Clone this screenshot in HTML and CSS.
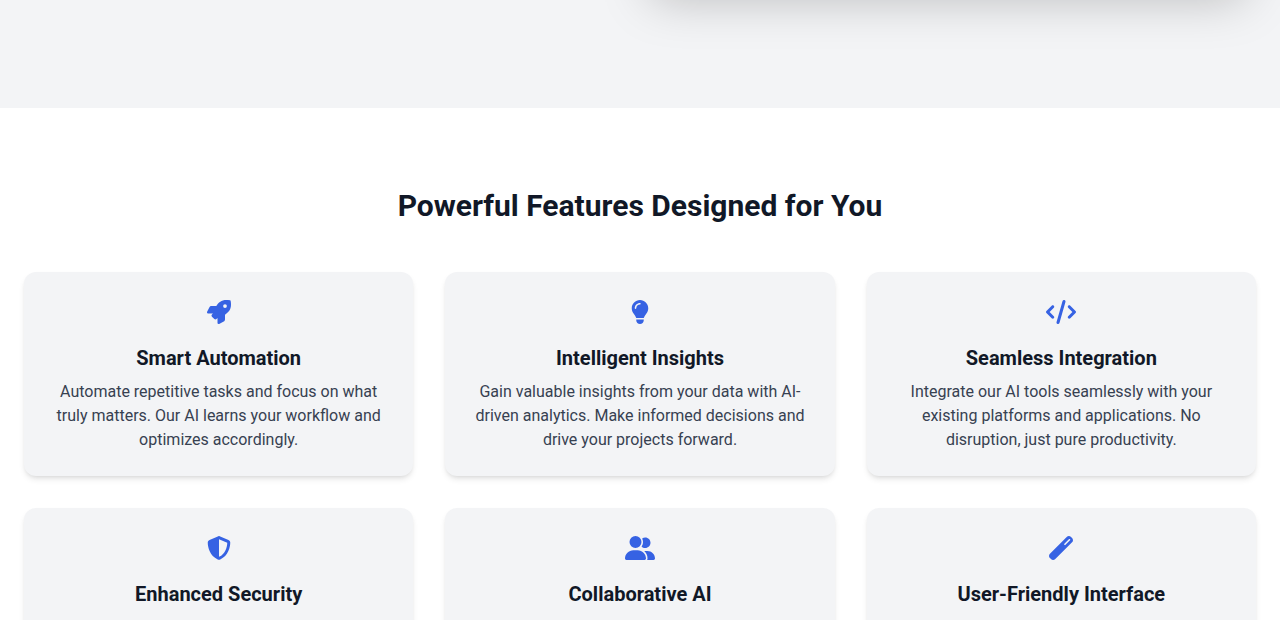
FILE: index.html
```html
<!DOCTYPE html>
<html lang="en">
<head>
<meta charset="utf-8">
<meta name="viewport" content="width=device-width, initial-scale=1">
<title>Powerful Features Designed for You</title>
<link rel="stylesheet" href="styles.css">
</head>
<body>
<div class="hero"><div class="hero-media"></div></div>
<section class="features">
  <h2 class="features-title">Powerful Features Designed for You</h2>
  <div class="feature-grid">
    <article class="card">
      <div class="card-icon"><svg viewBox="0 0 512 512" aria-hidden="true"><path d="M505.12 19.09c-1.19-5.53-6.66-11-12.21-12.19C460.72 0 435.51 0 410.41 0 307.18 0 245.27 55.2 199.05 128H94.84c-16.35 0-35.56 11.88-42.89 26.48L2.52 253.3A28.4 28.4 0 0 0 0 264a24 24 0 0 0 24 24h103.8l-22.46 22.47c-11.37 11.36-13 32.26 0 45.25l50.9 50.9c11.16 11.2 32.16 13.16 45.28 0L224 384.16V488a24 24 0 0 0 24 24 28.56 28.56 0 0 0 10.7-2.52l98.74-49.39c14.63-7.3 26.5-26.5 26.5-42.86V312.8c72.6-46.31 128.04-108.4 128.04-211.1 0-25.2 0-50.4-6.86-82.61zM384 168a40 40 0 1 1 40-40 40 40 0 0 1-40 40z"/></svg></div>
      <h3 class="card-title">Smart Automation</h3>
      <p class="card-text">Automate repetitive tasks and focus on what truly matters. Our AI learns your workflow and optimizes accordingly.</p>
    </article>
    <article class="card">
      <div class="card-icon"><svg viewBox="0 0 384 512" aria-hidden="true"><path d="M272 384c9.6-31.9 29.5-59.1 49.2-86.2c5.2-7.1 10.4-14.2 15.4-21.4c19.8-28.5 31.4-63 31.4-100.3C368 78.8 289.2 0 192 0S16 78.8 16 176c0 37.3 11.6 71.9 31.4 100.3c5 7.2 10.2 14.3 15.4 21.4c19.8 27.1 39.7 54.4 49.2 86.2H272zM192 512c44.2 0 80-35.8 80-80V416H112v16c0 44.2 35.8 80 80 80zM112 176c0 8.8-7.2 16-16 16s-16-7.2-16-16c0-61.9 50.1-112 112-112c8.8 0 16 7.2 16 16s-7.2 16-16 16c-44.2 0-80 35.8-80 80z"/></svg></div>
      <h3 class="card-title">Intelligent Insights</h3>
      <p class="card-text">Gain valuable insights from your data with AI-driven analytics. Make informed decisions and drive your projects forward.</p>
    </article>
    <article class="card">
      <div class="card-icon"><svg viewBox="0 0 640 512" aria-hidden="true"><path d="M392.8 1.2c-17-4.9-34.7 5-39.6 22l-128 448c-4.9 17 5 34.7 22 39.6s34.7-5 39.6-22l128-448c4.9-17-5-34.7-22-39.6zm80.6 120.1c-12.5 12.5-12.5 32.8 0 45.3L562.7 256l-89.4 89.4c-12.5 12.5-12.5 32.8 0 45.3s32.8 12.5 45.3 0l112-112c12.5-12.5 12.5-32.8 0-45.3l-112-112c-12.5-12.5-32.8-12.5-45.3 0zm-306.7 0c-12.5-12.5-32.8-12.5-45.3 0l-112 112c-12.5 12.5-12.5 32.8 0 45.3l112 112c12.5 12.5 32.8 12.5 45.3 0s12.5-32.8 0-45.3L77.3 256l89.4-89.4c12.5-12.5 12.5-32.8 0-45.3z"/></svg></div>
      <h3 class="card-title">Seamless Integration</h3>
      <p class="card-text">Integrate our AI tools seamlessly with your existing platforms and applications. No disruption, just pure productivity.</p>
    </article>
    <article class="card">
      <div class="card-icon"><svg viewBox="0 0 512 512" aria-hidden="true"><path d="M256 0c4.6 0 9.2 1 13.4 2.9L457.7 82.8c22 9.3 38.4 31 38.3 57.2c-.5 99.2-41.3 280.7-213.6 363.2c-16.7 8-36.1 8-52.8 0C57.3 420.7 16.5 239.2 16 140c-.1-26.2 16.3-47.9 38.3-57.2L242.7 2.9C246.8 1 251.4 0 256 0zm0 66.8V444.8C394 378 431.1 230.1 432 141.4L256 66.8z"/></svg></div>
      <h3 class="card-title">Enhanced Security</h3>
    </article>
    <article class="card">
      <div class="card-icon"><svg viewBox="0 0 640 512" aria-hidden="true"><path d="M96 128a128 128 0 1 1 256 0A128 128 0 1 1 96 128zM0 482.3C0 383.8 79.8 304 178.3 304h91.4C368.2 304 448 383.8 448 482.3c0 16.4-13.3 29.7-29.7 29.7H29.7C13.3 512 0 498.7 0 482.3zM609.3 512H471.4c5.4-9.4 8.6-20.3 8.6-32v-8c0-60.7-27.1-115.2-69.8-151.8c2.4-.1 4.7-.2 7.1-.2h61.4C567.8 320 640 392.2 640 481.3c0 17-13.8 30.7-30.7 30.7zM432 256c-31 0-59-12.6-79.3-32.9C372.4 196.5 384 163.6 384 128c0-26.8-6.6-52.1-18.3-74.3C384.3 40.1 407.2 32 432 32c61.9 0 112 50.1 112 112s-50.1 112-112 112z"/></svg></div>
      <h3 class="card-title">Collaborative AI</h3>
    </article>
    <article class="card">
      <div class="card-icon"><svg viewBox="0 0 512 512" aria-hidden="true"><path fill-rule="evenodd" d="M20 378L378 20c26-26 66-26 92 0l22 22c26 26 26 66 0 92L134 492c-26 26-66 26-92 0L20 470c-26-26-26-66 0-92zM342 198l106-106c8-8 8-16 0-24s-16-8-24 0L318 174z"/></svg></div>
      <h3 class="card-title">User-Friendly Interface</h3>
    </article>
  </div>
</section>
</body>
</html>
```
FILE: styles.css
```css
*, *::before, *::after { box-sizing: border-box; }

body {
  margin: 0;
  height: 100vh;
  overflow: hidden;
  background: #fff;
  color: #111827;
  font-family: Roboto, "Liberation Sans", sans-serif;
  font-size: 16px;
  line-height: 24px;
}

h2, h3, p { margin: 0; }

/* The top of the hero is scrolled out of view. */
.hero {
  display: grid;
  grid-template-columns: 1fr 1fr;
  margin-top: -96px;
  padding: 0 24px 124px;
  background: #f3f4f6;
}

.hero-media {
  grid-column: 2;
  height: 80px;
  border-radius: 12px;
  background: #fff;
  box-shadow: 0 25px 50px -12px rgba(0, 0, 0, 0.25);
}

.features {
  position: relative;
  padding: 80px 24px;
  background: #fff;
}

.features-title {
  margin-bottom: 48px;
  font-size: 30px;
  line-height: 36px;
  font-weight: 700;
  text-align: center;
}

.feature-grid {
  display: grid;
  grid-template-columns: repeat(3, 1fr);
  grid-auto-rows: 1fr;
  gap: 32px;
}

.card {
  padding: 24px;
  border-radius: 12px;
  background: #f3f4f6;
  box-shadow: 0 4px 6px -1px rgba(0, 0, 0, 0.1), 0 2px 4px -2px rgba(0, 0, 0, 0.1);
  text-align: center;
}

.card-icon {
  display: flex;
  align-items: center;
  justify-content: center;
  height: 32px;
  margin-bottom: 16px;
}

.card-icon svg {
  height: 24px;
  fill: #3662e3;
}

.card-title {
  margin-bottom: 8px;
  font-size: 20px;
  line-height: 28px;
  font-weight: 700;
}

.card-text { color: #374151; }
```
